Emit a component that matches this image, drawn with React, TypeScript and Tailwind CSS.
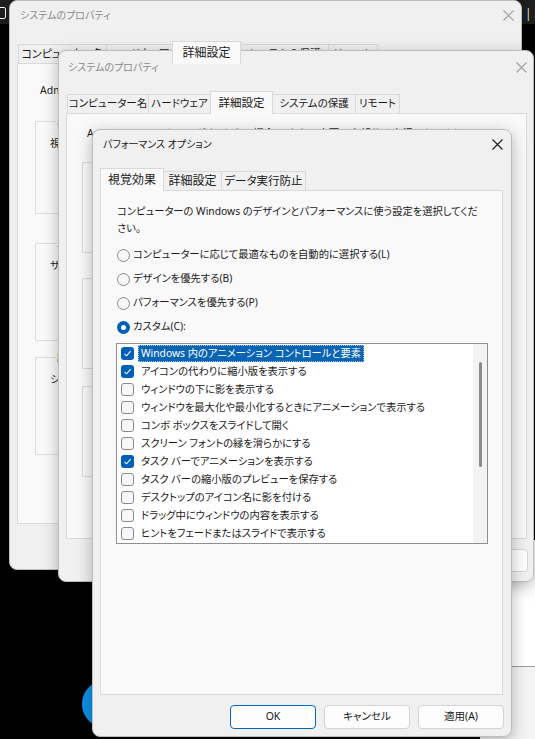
import React from 'react';

const ui = "font-['Noto_Sans','Noto_Sans_CJK_JP',sans-serif] [font-feature-settings:'palt']";

function CloseIcon({ className }: { className: string }) {
  return (
    <svg width="11" height="11" viewBox="0 0 11 11" className={className}>
      <path d="M0.5 0.5 10.5 10.5M10.5 0.5 0.5 10.5" stroke="currentColor" strokeWidth="1.1" fill="none" />
    </svg>
  );
}

function Frame({ className, children }: { className: string; children: React.ReactNode }) {
  return (
    <div
      className={`absolute flex flex-col rounded-[8px] border border-[#bdbdbd] bg-[#f0f0f0] shadow-[0_4px_16px_rgba(0,0,0,0.28)] ${className}`}
    >
      {children}
    </div>
  );
}

function TitleBar({ title, active, className }: { title: string; active?: boolean; className: string }) {
  return (
    <div className={`flex shrink-0 items-center justify-between ${className}`}>
      <span className={`whitespace-nowrap text-[10px] ${active ? 'text-[#1a1a1a]' : 'text-[#8a8a8a]'}`}>{title}</span>
      <CloseIcon className={active ? 'text-[#1a1a1a]' : 'text-[#a0a0a0]'} />
    </div>
  );
}

function Tab({ label, active, className }: { label: string; active?: boolean; className: string }) {
  return (
    <div
      className={`-ml-px flex shrink-0 items-center justify-center whitespace-nowrap border border-b-0 border-[#d9d9d9] text-[#1a1a1a] ${
        active ? 'relative z-10 -mb-px h-[23px] bg-[#f9f9f9]' : 'h-[19px] bg-[#f0f0f0]'
      } ${className}`}
    >
      {label}
    </div>
  );
}

function Group({ label, text, className }: { label: string; text: string; className: string }) {
  return (
    <fieldset className={`min-w-0 border border-[#dcdcdc] pl-[14px] ${className}`}>
      <legend className="ml-[6px] px-[1px] text-[10.5px] leading-[14px] text-[#1a1a1a]">{label}</legend>
      <div className="mt-[8px] whitespace-nowrap text-[10.5px] leading-[14px] text-[#1a1a1a]">{text}</div>
    </fieldset>
  );
}

function Btn({ label, primary }: { label: string; primary?: boolean }) {
  return (
    <button
      className={`flex h-full w-[86px] items-center justify-center rounded-[4px] bg-[#fdfdfd] text-[10.5px] text-[#1a1a1a] ${
        primary ? 'border-[1.5px] border-[#0067c0]' : 'border border-[#d3d3d3]'
      }`}
    >
      {label}
    </button>
  );
}

function Check({ checked }: { checked?: boolean }) {
  if (checked) {
    return (
      <div className="flex h-[13px] w-[13px] shrink-0 items-center justify-center rounded-[3px] bg-[#005fb8]">
        <svg width="9" height="9" viewBox="0 0 9 9">
          <path d="M1.5 4.8 3.6 6.8 7.6 2.2" stroke="white" strokeWidth="1.1" fill="none" />
        </svg>
      </div>
    );
  }
  return <div className="h-[13px] w-[13px] shrink-0 rounded-[3px] border border-[#8a8a8a] bg-[#f7f7f7]" />;
}

function Radio({ label, checked }: { label: string; checked?: boolean }) {
  return (
    <div className="flex h-[24px] items-center">
      {checked ? (
        <div className="flex h-[13px] w-[13px] items-center justify-center rounded-full bg-[#005fb8]">
          <div className="h-[5px] w-[5px] rounded-full bg-white" />
        </div>
      ) : (
        <div className="h-[13px] w-[13px] rounded-full border border-[#8a8a8a] bg-[#f7f7f7]" />
      )}
      <span className="ml-[3px] whitespace-nowrap text-[10.3px] text-[#1a1a1a]">{label}</span>
    </div>
  );
}

const effects = [
  { label: 'Windows 内のアニメーション コントロールと要素', checked: true },
  { label: 'アイコンの代わりに縮小版を表示する', checked: true },
  { label: 'ウィンドウの下に影を表示する' },
  { label: 'ウィンドウを最大化や最小化するときにアニメーションで表示する' },
  { label: 'コンボ ボックスをスライドして開く' },
  { label: 'スクリーン フォントの縁を滑らかにする' },
  { label: 'タスク バーでアニメーションを表示する', checked: true },
  { label: 'タスク バーの縮小版のプレビューを保存する' },
  { label: 'デスクトップのアイコン名に影を付ける' },
  { label: 'ドラッグ中にウィンドウの内容を表示する' },
  { label: 'ヒントをフェードまたはスライドで表示する' },
  { label: 'マウス ポインターの下に影を表示する' },
];

export default function App() {
  return (
    <div className={`relative h-[739px] w-[535px] overflow-hidden bg-black ${ui}`}>
      {/* desktop behind the dialogs */}
      <div className="absolute left-0 top-0 h-[24px] w-full bg-[#1f1f1f]" />
      <div className="absolute left-[-6px] top-[7px] h-[12px] w-[12px] rounded-[2px] border border-white" />
      <div className="absolute left-[525px] top-[5px] whitespace-nowrap text-[12px] text-[#e0e0e0]">| A</div>
      <div className="absolute left-[480px] top-[540px] flex h-[199px] w-[55px] flex-col">
        <div className="h-[127px] border-b border-[#9a9a9a] bg-white" />
        <div className="flex-1 bg-[#f3f3f3]" />
      </div>
      <div className="absolute left-[82px] top-[680px] h-[48px] w-[48px] rounded-full bg-[#0b93e6]" />

      {/* system properties (back) */}
      <Frame className="left-[9px] top-0 h-[570px] w-[513px]">
        <TitleBar title="システムのプロパティ" className="h-[28px] pl-[10px] pr-[7px]" />
        <div className="mt-[12px] flex h-[22px] items-end pl-[9px] text-[11px]">
          <Tab label="コンピューター名" className="w-[89px]" />
          <Tab label="ハードウェア" className="w-[67px]" />
          <Tab label="詳細設定" active className="w-[69px] text-[12px]" />
          <Tab label="システムの保護" className="w-[89px]" />
          <Tab label="リモート" className="w-[50px]" />
        </div>
        <div className="mx-[7px] h-[461px] border border-[#d9d9d9] bg-[#f9f9f9] pl-[17px] pt-[19px]">
          <div className="h-[14px] whitespace-nowrap pl-[5px] text-[10.5px] leading-[14px] text-[#1a1a1a]">
            Administrator としてログオンしない場合、これらの変更の大部分は実行できません。
          </div>
          <Group label="パフォーマンス" text="視覚効果、プロセッサのスケジュール、メモリ使用、および仮想メモリ" className="mr-[17px] mt-[17px] h-[100px]" />
          <Group label="ユーザー プロファイル" text="サインインに関連したデスクトップ設定" className="mr-[17px] mt-[22px] h-[105px]" />
          <Group label="起動と回復" text="システム起動、システム障害、およびデバッグ情報" className="mr-[17px] mt-[9px] h-[105px]" />
        </div>
      </Frame>

      {/* system properties (middle) */}
      <Frame className="left-[58px] top-[50px] h-[532px] w-[476px]">
        <TitleBar title="システムのプロパティ" className="h-[32px] pl-[9px] pr-[6px]" />
        <div className="mt-[8px] flex h-[22px] items-end pl-[9px] text-[10.5px]">
          <Tab label="コンピューター名" className="w-[82px]" />
          <Tab label="ハードウェア" className="w-[63px]" />
          <Tab label="詳細設定" active className="w-[63px] text-[11.5px]" />
          <Tab label="システムの保護" className="w-[84px]" />
          <Tab label="リモート" className="w-[45px]" />
        </div>
        <div className="ml-[7px] mr-[6px] h-[426px] border border-[#d9d9d9] bg-[#f9f9f9] pl-[15px] pt-[12px]">
          <div className="h-[14px] whitespace-nowrap pl-[5px] text-[10.5px] leading-[14px] text-[#1a1a1a]">
            Administrator としてログオンしない場合、これらの変更の大部分は実行できません。
          </div>
          <Group label="パフォーマンス" text="視覚効果、プロセッサのスケジュール、メモリ使用、および仮想メモリ" className="mr-[15px] mt-[15px] h-[98px]" />
          <Group label="ユーザー プロファイル" text="サインインに関連したデスクトップ設定" className="mr-[15px] mt-[18px] h-[98px]" />
          <Group label="起動と回復" text="システム起動、システム障害、およびデバッグ情報" className="mr-[15px] mt-[10px] h-[98px]" />
        </div>
        <div className="mr-[5px] mt-[10px] flex h-[23px] justify-end gap-[8px]">
          <Btn label="OK" />
          <Btn label="キャンセル" />
          <Btn label="適用(A)" />
        </div>
      </Frame>

      {/* performance options (front) */}
      <Frame className="left-[92px] top-[129px] h-[608px] w-[420px]">
        <TitleBar title="パフォーマンス オプション" active className="h-[28px] pl-[10px] pr-[8px]" />
        <div className="mt-[10px] flex h-[22px] items-end pl-[8px] text-[12px]">
          <Tab label="視覚効果" active className="w-[64px]" />
          <Tab label="詳細設定" className="w-[59px]" />
          <Tab label="データ実行防止" className="w-[85px] text-[11.5px]" />
        </div>
        <div className="ml-[7px] mr-[8px] h-[505px] border border-[#d9d9d9] bg-[#f9f9f9] pl-[16px] pt-[12px]">
          <p className="whitespace-nowrap text-[10.3px] leading-[17px] text-[#1a1a1a]">
            コンピューターの Windows のデザインとパフォーマンスに使う設定を選択してくだ
            <br />
            さい。
          </p>
          <div className="mt-[6px] flex flex-col">
            <Radio label="コンピューターに応じて最適なものを自動的に選択する(L)" />
            <Radio label="デザインを優先する(B)" />
            <Radio label="パフォーマンスを優先する(P)" />
            <Radio label="カスタム(C):" checked />
          </div>
          <div className="-ml-px mt-[4px] flex h-[201px] w-[372px] overflow-hidden border border-[#8f8f8f] bg-white">
            <div className="flex min-w-0 flex-1 flex-col">
              {effects.map((item, i) => (
                <div key={item.label} className="flex h-[18px] shrink-0 items-center pl-[4px]">
                  <Check checked={item.checked} />
                  <span
                    className={`ml-[4px] whitespace-nowrap px-[2px] text-[10.3px] leading-[15px] ${
                      i === 0
                        ? 'border border-dotted border-[#9cc3ea] bg-[#0a64b4] text-white'
                        : 'border border-transparent text-[#1a1a1a]'
                    }`}
                  >
                    {item.label}
                  </span>
                </div>
              ))}
            </div>
            <div className="flex w-[14px] shrink-0 justify-center bg-[#f3f3f3]">
              <div className="mt-[18px] h-[105px] w-[3px] rounded-full bg-[#8a8a8a]" />
            </div>
          </div>
        </div>
        <div className="mr-[7px] mt-[10px] flex h-[24px] justify-end gap-[8px]">
          <Btn label="OK" primary />
          <Btn label="キャンセル" />
          <Btn label="適用(A)" />
        </div>
      </Frame>
    </div>
  );
}
